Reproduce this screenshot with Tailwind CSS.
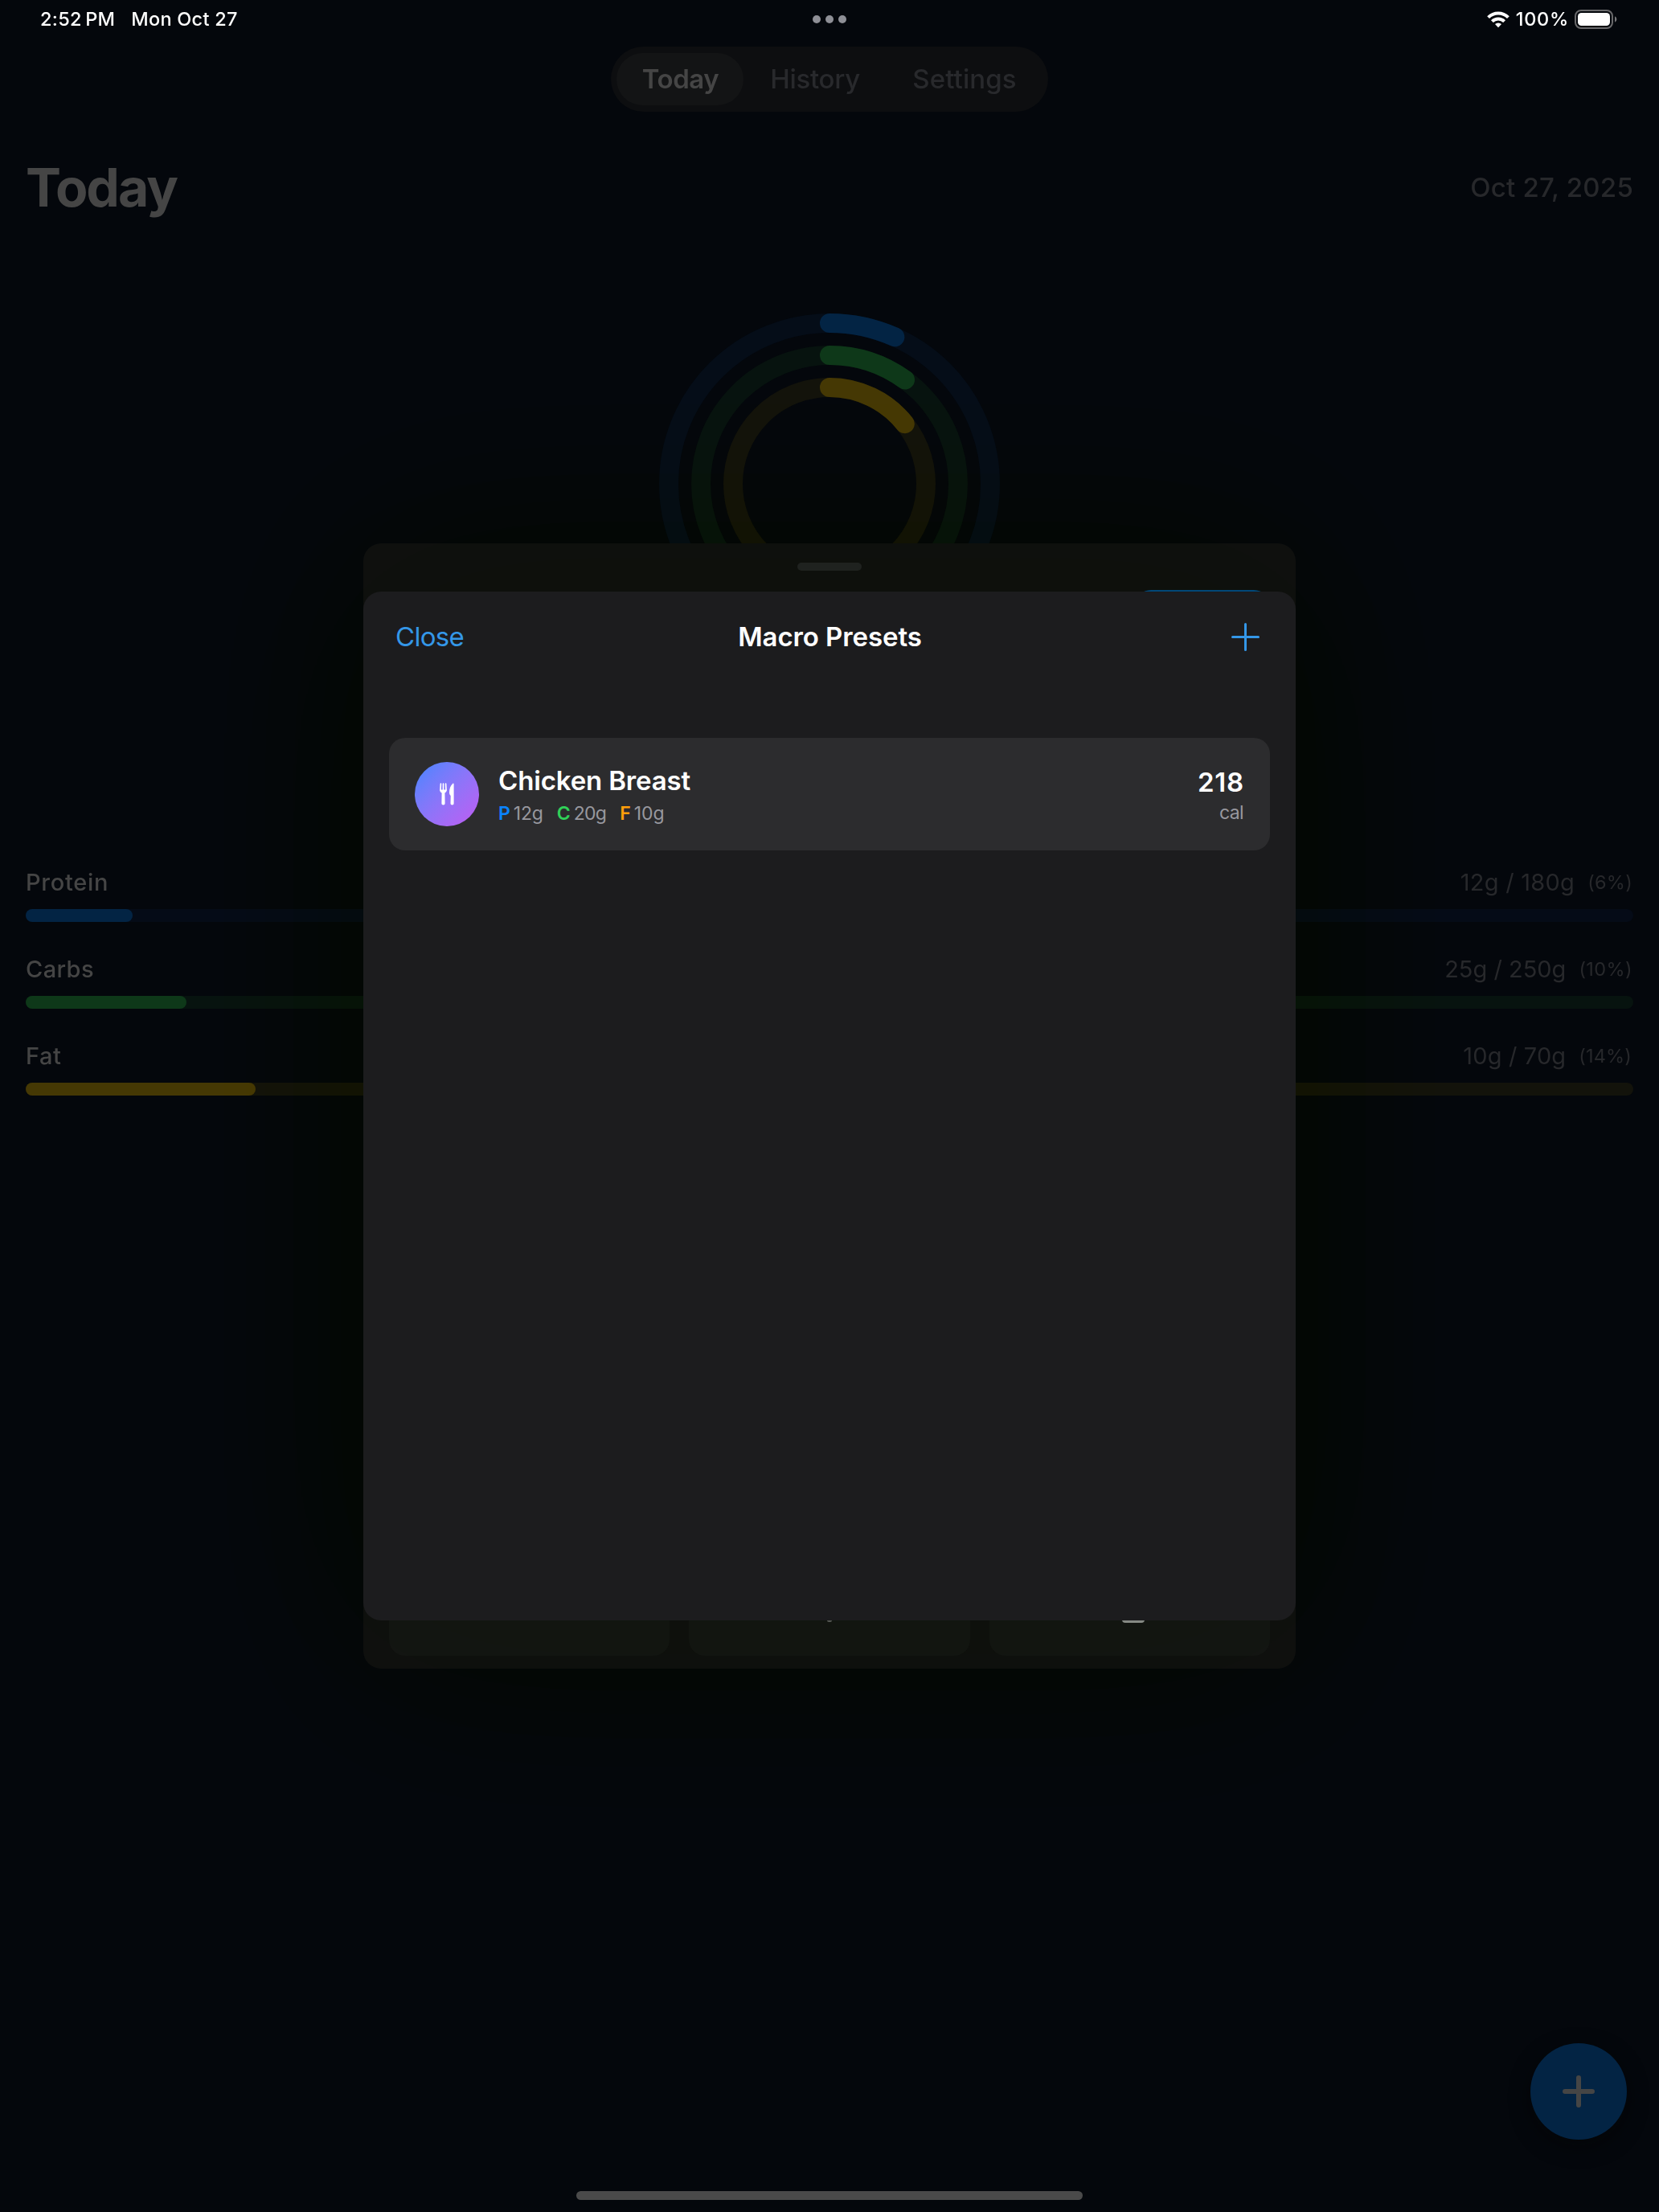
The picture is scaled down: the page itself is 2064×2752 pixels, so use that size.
<!DOCTYPE html>
<html lang="en">
<head>
<meta charset="utf-8">
<title>Macro Presets</title>
<script src="https://cdn.jsdelivr.net/npm/@tailwindcss/browser@4"></script>
</head>
<body class="bg-[#04070c]">
<div class="relative flex h-[2752px] w-[2064px] flex-col overflow-hidden bg-[#04070c] font-['Inter',sans-serif] text-[#454545]">

  <!-- Status bar -->
  <header class="flex h-12 items-center justify-between pr-[52px] pl-[50px] text-[23.5px] font-medium text-white">
    <div class="flex w-[900px] gap-[20px] whitespace-nowrap">
      <span class="tracking-[0.3px]">2:52&#8201;PM</span>
      <span class="tracking-[0.25px]">Mon Oct 27</span>
    </div>
    <div class="flex gap-[6px]">
      <i class="size-[10px] rounded-full bg-[#8e8f96]"></i>
      <i class="size-[10px] rounded-full bg-[#8e8f96]"></i>
      <i class="size-[10px] rounded-full bg-[#8e8f96]"></i>
    </div>
    <div class="flex w-[898px] items-center justify-end">
      <svg class="h-[21px] w-[28px]" viewBox="0 0 28 21" fill="none" stroke="#fff" stroke-width="4">
        <path d="M1.6 7.6a17.6 17.6 0 0 1 24.8 0"/>
        <path d="M6.4 12.6a10.8 10.8 0 0 1 15.2 0"/>
        <path d="M14 20.2l-4-4.1a5.8 5.8 0 0 1 8 0z" fill="#fff" stroke="none"/>
      </svg>
      <span class="ml-2 tracking-[0.7px]">100%</span>
      <svg class="ml-[7px] h-[24px] w-[53px]" viewBox="0 0 53 24" fill="none">
        <rect x="1" y="1" width="46" height="22" rx="7" stroke="#69696b" stroke-width="2"/>
        <rect x="4" y="4" width="40" height="16" rx="4.5" fill="#fff"/>
        <path d="M50 8.2a4.2 4.2 0 0 1 0 7.6z" fill="#77777a"/>
      </svg>
    </div>
  </header>

  <!-- Tabs -->
  <nav class="mx-auto mt-[10px] flex h-[81px] w-[544px] items-center rounded-full bg-[#0d0e10] px-[7px] text-[33px] font-medium text-[#28292c]">
    <span class="flex h-[65px] w-[158px] items-center justify-center rounded-full bg-[#131415] pl-[1px] font-semibold tracking-[-0.4px] text-[#454545]">Today</span>
    <span class="w-[178px] text-center tracking-[-0.3px]">History</span>
    <span class="w-[194px] text-center tracking-[0.1px]">Settings</span>
  </nav>

  <!-- Page title -->
  <div class="mt-[44px] flex h-[100px] items-center justify-between pr-[32px] pl-[32px]">
    <h1 class="text-[66px] font-bold tracking-[-2px]">Today</h1>
    <span class="pt-[2px] text-[33px] font-medium tracking-[0.2px] text-[#27282b]">Oct 27, 2025</span>
  </div>

  <!-- Macro rings -->
  <svg class="mx-auto mt-[107px] size-[424px] shrink-0" viewBox="0 0 424 424" fill="none" stroke-width="24" stroke-linecap="round">
    <circle cx="212" cy="212" r="200" stroke="#050d18"/>
    <circle cx="212" cy="212" r="160" stroke="#07130f"/>
    <circle cx="212" cy="212" r="120" stroke="#13130b"/>
    <g transform="rotate(-90 212 212)">
      <circle cx="212" cy="212" r="200" stroke="#032444" pathLength="100" stroke-dasharray="6.67 100"/>
      <circle cx="212" cy="212" r="160" stroke="#0e3819" pathLength="100" stroke-dasharray="10 100"/>
      <circle cx="212" cy="212" r="120" stroke="#453804" pathLength="100" stroke-dasharray="14.28 100"/>
    </g>
  </svg>

  <!-- Macro progress -->
  <section class="mt-[262px] flex flex-col gap-[36px] px-8 text-[29px]">
    <div>
      <div class="flex h-[43px] items-center justify-between">
        <span class="font-medium tracking-[0.7px]">Protein</span>
        <span class="flex items-center gap-[16px] pr-[1px] text-[#27282b]"><span class="tracking-[0.25px]">12g / 180g</span><span class="text-[23.5px] tracking-[0.26px]">(6%)</span></span>
      </div>
      <div class="mt-[12px] h-4 rounded-full bg-[#050b17]"><div class="h-4 w-[133px] rounded-full bg-[#032444]"></div></div>
    </div>
    <div>
      <div class="flex h-[44px] items-center justify-between pt-[1px]">
        <span class="font-medium tracking-[0.4px]">Carbs</span>
        <span class="flex items-center gap-[16px] pr-[1px] text-[#27282b]"><span>25g / 250g</span><span class="text-[23.5px] tracking-[0.4px]">(10%)</span></span>
      </div>
      <div class="mt-[12px] h-4 rounded-full bg-[#07130f]"><div class="h-4 w-[200px] rounded-full bg-[#0e3819]"></div></div>
    </div>
    <div>
      <div class="flex h-[44px] items-center justify-between pt-[1px]">
        <span class="font-medium tracking-[0.5px]">Fat</span>
        <span class="flex items-center gap-[16px] text-[#27282b]"><span class="tracking-[0.14px]">10g / 70g</span><span class="mr-[2px] text-[23.5px] tracking-[0.15px]">(14%)</span></span>
      </div>
      <div class="mt-[12px] h-4 rounded-full bg-[#13130b]"><div class="h-4 w-[286px] rounded-full bg-[#453804]"></div></div>
    </div>
  </section>

  <!-- Floating add button -->
  <div class="absolute right-[40px] bottom-[90px] flex size-[120px] items-center justify-center rounded-full bg-[#032444] shadow-[0_8px_24px_rgba(4,4,4,0.5)]">
    <svg class="size-[40px]" viewBox="0 0 40 40" stroke="#454545" stroke-width="6" stroke-linecap="round"><path d="M20 3v34M3 20h34"/></svg>
  </div>

  <!-- Home indicator -->
  <div class="absolute bottom-[15px] left-[717px] h-[11px] w-[630px] rounded-full bg-[#4a4a4a]"></div>

  <!-- Sheet behind -->
  <div class="absolute top-[676px] left-[452px] h-[1400px] w-[1160px] rounded-[22px] mix-blend-difference shadow-[0_0_400px_rgb(1,0,12)]"></div>
  <div class="absolute top-[676px] left-[452px] flex h-[1400px] w-[1160px] flex-col items-center overflow-hidden rounded-[22px] bg-[#0f100f]">
    <div class="mt-6 h-[10px] w-[80px] shrink-0 rounded-full bg-[#202222]"></div>
    <div class="mt-[24px] mr-[32px] h-[60px] w-[168px] shrink-0 self-end rounded-[20px] bg-[#02487b]"></div>
    <div class="mt-auto mb-4 flex w-full gap-6 px-8">
      <div class="h-[160px] flex-1 rounded-[20px] bg-[#131513]"></div>
      <div class="flex h-[160px] flex-1 items-start justify-center rounded-[20px] bg-[#131513]"><i class="mt-[114px] h-[4px] w-[6px] rounded-full bg-[#555755]"></i></div>
      <div class="flex h-[160px] flex-1 items-start justify-center rounded-[20px] bg-[#131513]"><i class="mt-[106px] mr-[-10px] h-[13px] w-[28px] rounded-[4px] bg-[#868986]"></i></div>
    </div>
  </div>

  <!-- Macro presets sheet -->
  <div class="absolute top-[736px] left-[452px] h-[1280px] w-[1160px] rounded-[22px] mix-blend-difference shadow-[0_0_400px_rgb(4,1,8)]"></div>
  <main class="absolute top-[736px] left-[452px] flex h-[1280px] w-[1160px] flex-col rounded-[22px] bg-[#1c1c1e] px-8">
    <div class="flex h-[113px] items-center justify-between pr-[13px] pl-[8px] text-[33px]">
      <span class="w-[200px] tracking-[-0.7px] text-[#3497e8]">Close</span>
      <h2 class="pl-[1px] font-semibold tracking-[-0.1px] text-white">Macro Presets</h2>
      <span class="flex w-[195px] justify-end">
        <svg class="size-[35px]" viewBox="0 0 35 35" stroke="#3497e8" stroke-width="3" stroke-linecap="round"><path d="M17.5 1.5v32M1.500 17.500h32"/></svg>
      </span>
    </div>
    <article class="mt-[69px] flex h-[140px] items-center rounded-[20px] bg-[#2c2c2e] px-8">
      <div class="flex size-[80px] items-center justify-center rounded-full bg-linear-to-br from-[#3a86ff] to-[#bf5af2]">
        <svg class="h-[28px] w-[18px]" viewBox="0 0 18 28" fill="#fff">
          <path d="M1.400 1.200L1 9M4.500 1.200V9M7.600 1.200L8 9" fill="none" stroke="#fff" stroke-width="1.700" stroke-linecap="round"/>
          <path d="M.2 8.500h8.600c0 2-.7 3.100-2.400 3.900l.2 13.100c0 1.200-.8 1.900-2.100 1.900s-2.100-.7-2.100-1.900l.2-13.100C.9 11.600.2 10.500.2 8.500z"/>
          <path d="M17.600 1.600c0-1-.7-1.400-1.400-.7-2.600 2.400-4.200 6.300-4.200 10.900 0 2 .5 3.100 1.700 4.200l-.2 9.500c0 1.200.8 1.900 2.100 1.900s2-.7 2-1.900z"/>
        </svg>
      </div>
      <div class="ml-6 flex flex-col">
        <span class="text-[33px] leading-[44px] font-semibold tracking-[-0.15px] text-white">Chicken Breast</span>
        <div class="mt-[3px] flex gap-[17px] text-[23px] leading-[32px] text-[#98989f]">
          <span class="flex gap-[4px]"><b class="font-semibold text-[#0a84ff]">P</b><span class="tracking-[-0.2px]">12g</span></span>
          <span class="flex gap-[4px]"><b class="font-semibold text-[#30d158]">C</b><span class="tracking-[-0.7px]">20g</span></span>
          <span class="flex gap-[4px]"><b class="font-semibold text-[#ff9f0a]">F</b><span class="tracking-[-0.1px]">10g</span></span>
        </div>
      </div>
      <div class="ml-auto flex flex-col items-end pt-[1px]">
        <span class="text-[33px] leading-[44px] font-semibold tracking-[0.8px] text-white">218</span>
        <span class="mr-[1px] text-[23px] leading-[32px] tracking-[-0.6px] text-[#98989f]">cal</span>
      </div>
    </article>
  </main>
</div>
</body>
</html>
